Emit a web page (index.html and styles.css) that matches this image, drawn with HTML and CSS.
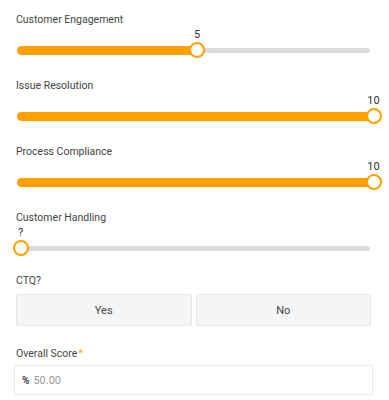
FILE: index.html
```html
<!DOCTYPE html>
<html lang="en">
<head>
    <meta charset="UTF-8">
    <link rel="stylesheet" href="styles.css">
    <title>Score</title>
</head>
<body>
    <div class="form">
        <div class="field">
            <div class="label">Customer Engagement</div>
            <div class="slider" style="--v:0.5">
                <div class="value">5</div>
                <div class="rail"></div>
                <div class="fill"></div>
                <div class="thumb"></div>
            </div>
        </div>

        <div class="field">
            <div class="label">Issue Resolution</div>
            <div class="slider" style="--v:1">
                <div class="value">10</div>
                <div class="rail"></div>
                <div class="fill"></div>
                <div class="thumb"></div>
            </div>
        </div>

        <div class="field">
            <div class="label">Process Compliance</div>
            <div class="slider" style="--v:1">
                <div class="value">10</div>
                <div class="rail"></div>
                <div class="fill"></div>
                <div class="thumb"></div>
            </div>
        </div>

        <div class="field last-slider">
            <div class="label">Customer Handling</div>
            <div class="slider empty" style="--v:0">
                <div class="value">?</div>
                <div class="rail"></div>
                <div class="thumb"></div>
            </div>
        </div>

        <div class="field ctq">
            <div class="label">CTQ?</div>
            <div class="choices">
                <button class="choice">Yes</button>
                <button class="choice">No</button>
            </div>
        </div>

        <div class="field score">
            <div class="label">Overall Score<span class="req">*</span></div>
            <div class="input">
                <span class="unit">%</span>
                <span class="placeholder">50.00</span>
            </div>
        </div>
    </div>
</body>
</html>
```

FILE: styles.css
```css
body {
    margin: 0;
    padding: 0;
    background: #fff;
    font-family: Roboto, 'Liberation Sans', sans-serif;
    color: #444;
}

.form {
    padding: 12px 16px 0 16px;
}

.field {
    margin-bottom: 19px;
}

.last-slider {
    margin-bottom: 16px;
}

.label {
    font-size: 10.5px;
    line-height: 16px;
    color: #454545;
}

.slider {
    position: relative;
    margin: 14px 3px 0 1px;
    height: 17px;
}

.value {
    position: absolute;
    left: calc(3.5px + var(--v) * 100%);
    top: -14px;
    transform: translateX(-50%);
    font-size: 11px;
    line-height: 14px;
    color: #333;
}

.rail {
    position: absolute;
    left: 0;
    right: 0;
    top: 6px;
    height: 5px;
    border-radius: 3px;
    background: #dcdce0;
}

.fill {
    position: absolute;
    left: 0;
    top: 4px;
    height: 9px;
    width: calc(3.5px + var(--v) * 100%);
    border-radius: 5px;
    background: #ffa000;
}

.thumb {
    position: absolute;
    top: 0;
    left: calc(3.5px + var(--v) * 100%);
    transform: translateX(-50%);
    width: 12px;
    height: 12px;
    border: 2.5px solid #ffa000;
    border-radius: 50%;
    background: #fff;
}

.choices {
    display: grid;
    grid-template-columns: 1fr 1fr;
    gap: 4px;
    margin: 5px 2px 0 0;
}

.choice {
    height: 32px;
    border: 1px solid #e6e7ea;
    border-radius: 2px;
    background: #f4f5f7;
    font-family: Roboto, 'Liberation Sans', sans-serif;
    font-size: 11px;
    color: #444;
}

.ctq {
    margin-bottom: 20px;
}

.req {
    color: #ffa000;
    margin-left: 1px;
}

.input {
    display: flex;
    align-items: center;
    gap: 4px;
    height: 28px;
    margin: 3px 0 0 -2px;
    padding: 0 7px;
    border: 1px solid #e8e9ec;
    border-radius: 3px;
    font-size: 11px;
}

.unit {
    font-weight: bold;
    color: #444;
    font-size: 10px;
}

.placeholder {
    color: #999;
}
```
